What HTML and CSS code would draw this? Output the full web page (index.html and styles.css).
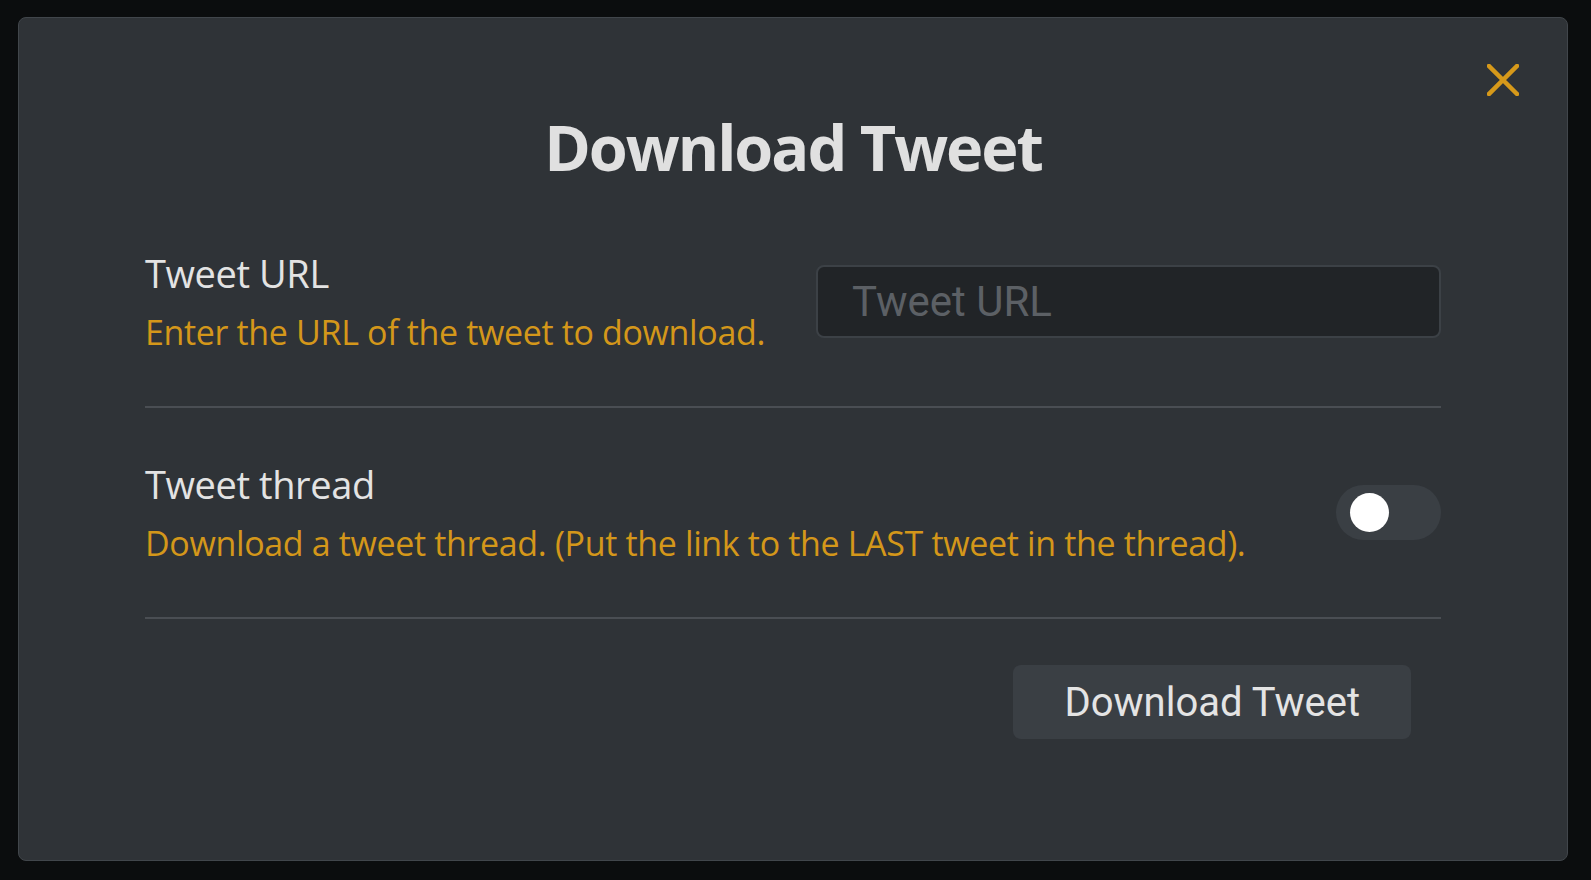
FILE: index.html
```html
<!DOCTYPE html>
<html lang="en">
<head>
<meta charset="utf-8">
<title>Download Tweet</title>
<link rel="stylesheet" href="styles.css">
</head>
<body>
<div class="modal">
  <button class="close" aria-label="Close">
    <svg viewBox="0 0 32 32" width="32" height="32"><path d="M2 2 L30 30 M30 2 L2 30" stroke="currentColor" stroke-width="4.5" stroke-linecap="square" fill="none"/></svg>
  </button>
  <h1 class="title">Download Tweet</h1>
  <div class="content">
    <div class="row">
      <div class="text">
        <div class="label">Tweet URL</div>
        <div class="desc">Enter the URL of the tweet to download.</div>
      </div>
      <input class="url-input" type="text" placeholder="Tweet URL">
    </div>
    <div class="row">
      <div class="text">
        <div class="label">Tweet thread</div>
        <div class="desc">Download a tweet thread. (Put the link to the LAST tweet in the thread).</div>
      </div>
      <div class="toggle"><span class="knob"></span></div>
    </div>
    <div class="actions">
      <button class="btn">Download Tweet</button>
    </div>
  </div>
</div>
</body>
</html>
```
FILE: styles.css
```css
html, body {
  margin: 0;
  padding: 0;
  background: #0b0d0e;
  height: 100%;
}
body {
  font-family: "Open Sans", "Noto Sans", sans-serif;
  color: #e3e3e3;
  overflow: hidden;
}
.modal {
  position: relative;
  box-sizing: border-box;
  margin: 17px 23px 0 18px;
  height: 844px;
  background: #2f3337;
  border: 1px solid #41464b;
  border-radius: 8px;
  padding: 92px 126px 0 126px;
}
.close {
  position: absolute;
  top: 46px;
  right: 48px;
  width: 32px;
  height: 32px;
  padding: 0;
  border: 0;
  background: transparent;
  color: #d6991a;
  cursor: pointer;
}
.close svg { display: block; }
.title {
  margin: 0 0 13px 0;
  text-align: center;
  font-size: 63px;
  line-height: 74px;
  font-weight: 700;
  color: #e0e0e0;
  letter-spacing: -2px;
}
.row {
  display: flex;
  align-items: center;
  justify-content: space-between;
  gap: 16px;
  padding: 48px 0;
  border-bottom: 2px solid #4a4e53;
}
.text { flex: 1; min-width: 0; }
.label {
  font-size: 38px;
  line-height: 57px;
  letter-spacing: -0.4px;
  color: #e3e3e3;
}
.desc {
  margin-top: 5px;
  font-size: 34px;
  line-height: 51px;
  letter-spacing: -0.35px;
  color: #d4971a;
  white-space: nowrap;
}
.url-input {
  box-sizing: border-box;
  flex: none;
  width: 625px;
  height: 73px;
  background: #212427;
  border: 2px solid #3c4146;
  border-radius: 8px;
  padding: 0 34px;
  font-family: Roboto, sans-serif;
  font-size: 42px;
  color: #e0e0e0;
  outline: none;
}
.url-input::placeholder { color: #5c6065; }
.toggle {
  position: relative;
  width: 105px;
  height: 55px;
  border-radius: 28px;
  background: #3a3f44;
  flex: none;
}
.knob {
  position: absolute;
  left: 14px;
  top: 8px;
  width: 39px;
  height: 39px;
  border-radius: 50%;
  background: #ffffff;
}
.actions {
  display: flex;
  justify-content: flex-end;
  padding: 46px 30px 0 0;
}
.btn {
  box-sizing: border-box;
  height: 74px;
  padding: 0 51px;
  background: #3a3f44;
  border: 0;
  border-radius: 8px;
  font-family: Roboto, sans-serif;
  font-size: 40px;
  color: #e4e4e4;
  cursor: pointer;
}
```
